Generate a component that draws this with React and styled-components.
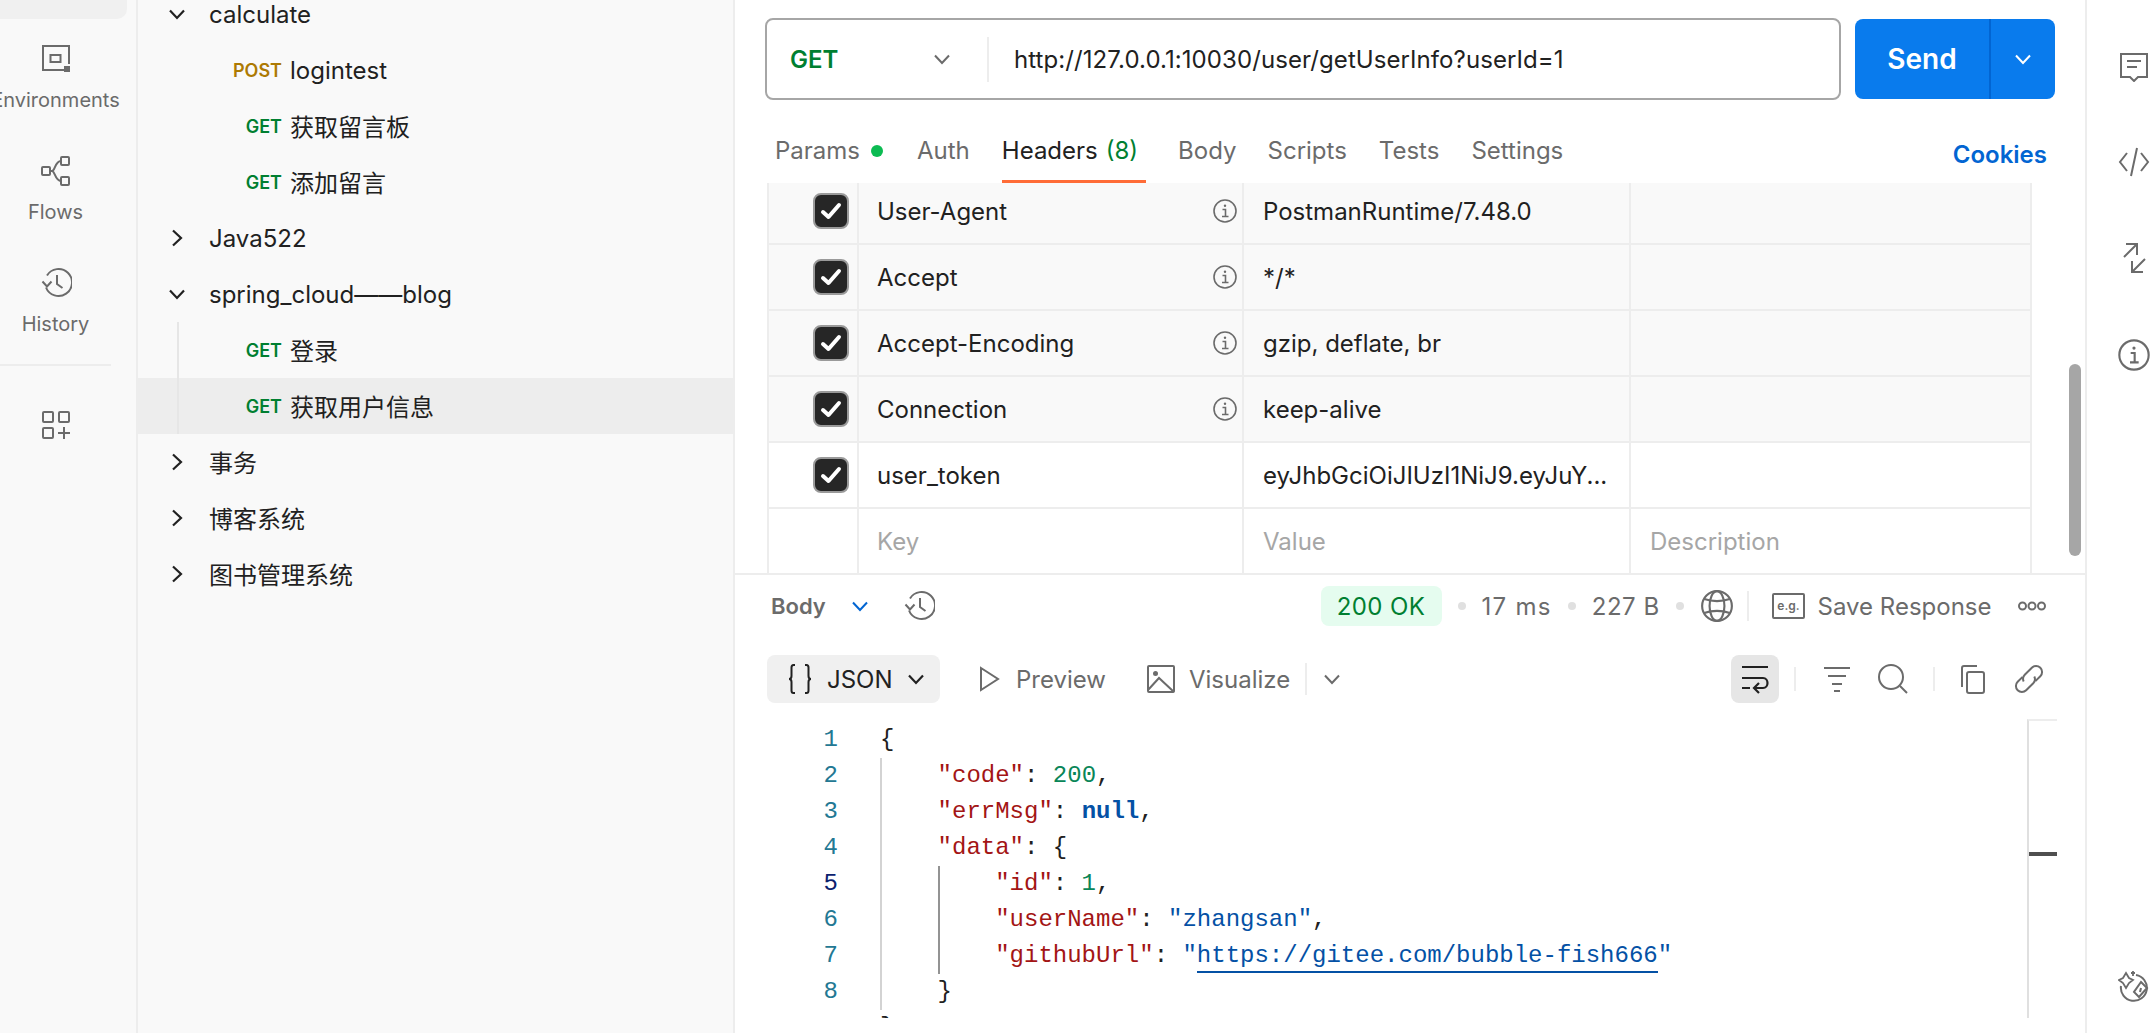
import React from "react";
import styled, { createGlobalStyle } from "styled-components";

const Global = createGlobalStyle`
  html, body { margin: 0; padding: 0; background: #fff; overflow: hidden; }
  * { box-sizing: border-box; }
  body { font-family: Inter, "Noto Sans CJK SC", sans-serif; color: #212121; }
`;

const Page = styled.div`
  display: grid;
  grid-template-columns: 138px 597px 1350px 69px;
  width: 2154px;
  height: 1033px;
  overflow: hidden;
`;

/* left rail */
const Rail = styled.nav`
  background: #f9f9f9;
  border-right: 2px solid #ededed;
  overflow: hidden;
  display: flex;
  flex-direction: column;
`;
const RailActive = styled.div`
  width: 127px;
  height: 19px;
  flex: none;
  background: #f0f0f0;
  border-radius: 0 0 10px 0;
  margin-bottom: 24px;
`;
const RailItem = styled.div`
  width: 111px;
  height: 80px;
  flex: none;
  margin-bottom: 32px;
  display: flex;
  flex-direction: column;
  align-items: center;
  gap: 12.5px;
  color: #6b6b6b;
  font-size: 20px;
  line-height: 24px;
  white-space: nowrap;
`;
const RailRule = styled.div`
  width: 111px;
  height: 2px;
  flex: none;
  margin-top: -15px;
  background: #ededed;
`;
const RailAdd = styled.div`
  width: 111px;
  margin-top: 43px;
  display: flex;
  justify-content: center;
`;

/* tree */
const Side = styled.aside`
  background: #f9f9f9;
  border-right: 2px solid #ededed;
  overflow: hidden;
`;
const Tree = styled.div`
  margin-top: -14px;
`;
const Row = styled.div`
  position: relative;
  height: 56px;
  display: flex;
  align-items: center;
  font-size: 24px;
  color: #212121;
  white-space: nowrap;
  background: ${(p) => (p.$selected ? "#ededed" : "transparent")};
  ${(p) =>
    p.$guide
      ? `&::before { content: ""; position: absolute; left: 39px; top: 0; bottom: 0; width: 2px; background: #e6e6e6; }`
      : ""}
`;
const RowLabel = styled.span`
  margin-top: ${(p) => (p.$cjk ? "-2px" : "0")};
`;
const Chevron = styled.span`
  width: 24px;
  margin-left: 27px;
  margin-right: 20px;
  display: flex;
  justify-content: center;
  color: #212121;
`;
const Method = styled.span`
  width: 144px;
  margin-right: 8px;
  text-align: right;
  font-size: 18px;
  font-weight: 600;
  color: ${(p) => (p.$post ? "#ad7a03" : "#007f31")};
`;

/* main */
const Main = styled.main`
  position: relative;
  display: flex;
  flex-direction: column;
  background: #fff;
  overflow: hidden;
`;
const UrlRow = styled.div`
  display: flex;
  align-items: center;
  gap: 14px;
  padding: 18px 30px 0;
`;
const UrlBox = styled.div`
  width: 1076px;
  height: 82px;
  border: 2px solid #a6a6a6;
  border-radius: 8px;
  display: flex;
  align-items: center;
  font-size: 24px;
`;
const MethodPick = styled.div`
  width: 222px;
  height: 45px;
  padding-left: 23px;
  padding-right: 33px;
  border-right: 2px solid #ededed;
  display: flex;
  align-items: center;
  justify-content: space-between;
  color: #007f31;
  font-weight: 600;
`;
const UrlText = styled.span`
  margin-left: 25px;
  letter-spacing: 0.08px;
`;
const SendBtn = styled.div`
  width: 200px;
  height: 80px;
  border-radius: 8px;
  background: #097bed;
  color: #fff;
  display: flex;
  align-items: center;
  font-size: 28px;
  font-weight: 600;
`;
const SendLabel = styled.span`
  width: 134px;
  text-align: center;
`;
const SendMore = styled.span`
  flex: 1;
  height: 100%;
  border-left: 2px solid #0265d2;
  display: flex;
  align-items: center;
  justify-content: center;
`;
const TabsRow = styled.div`
  display: flex;
  align-items: flex-start;
  gap: 32px;
  height: 83px;
  padding: 20px 38px 0 40px;
  font-size: 24px;
  color: #6b6b6b;
`;
const Tab = styled.div`
  height: 63px;
  line-height: 62px;
  white-space: nowrap;
  display: flex;
  align-items: flex-start;
  margin-right: ${(p) => p.$mr || 0}px;
  color: ${(p) => (p.$active ? "#212121" : "#6b6b6b")};
  ${(p) => (p.$active ? "border-bottom: 3px solid #ff6c37; padding-right: 8px;" : "")}
`;
const Count = styled.span`
  color: #007f31;
  margin-left: 8px;
`;
const GreenDot = styled.i`
  width: 12px;
  height: 12px;
  margin: 25px 0 0 11px;
  border-radius: 50%;
  background: #0cbb52;
`;
const Cookies = styled.div`
  margin-left: auto;
  margin-top: 4px;
  line-height: 62px;
  color: #0265d2;
  font-weight: 600;
`;
const TableClip = styled.div`
  height: 390px;
  overflow: hidden;
  margin-left: 32px;
  width: 1265px;
`;
const Table = styled.div`
  margin-top: -4px;
  font-size: 24px;
`;
const TRow = styled.div`
  display: grid;
  grid-template-columns: 90px 385px 387px 403px;
  height: 66px;
  border-bottom: 2px solid #ededed;
  background: ${(p) => (p.$muted ? "#f9f9f9" : "#fff")};
`;
const Cell = styled.div`
  border-left: 2px solid #ededed;
  ${(p) => (p.$last ? "border-right: 2px solid #ededed;" : "")}
  padding-left: ${(p) => p.$pl || 18}px;
  padding-right: 5px;
  display: flex;
  align-items: center;
  justify-content: space-between;
  white-space: nowrap;
  color: ${(p) => (p.$ph ? "#a6a6a6" : "#212121")};
`;
const CheckCell = styled(Cell)`
  padding: 0 8px 0 0;
  justify-content: flex-end;
`;
const Box = styled.span`
  width: 36px;
  height: 36px;
  border-radius: 8px;
  background: #262626;
  border: 2px solid #9a9a9a;
  display: flex;
  align-items: center;
  justify-content: center;
`;
const Scrollbar = styled.div`
  position: absolute;
  left: 1334px;
  top: 364px;
  width: 12px;
  height: 192px;
  border-radius: 6px;
  background: #a6a6a6;
`;
const RespHead = styled.div`
  height: 64px;
  border-top: 2px solid #ededed;
  display: flex;
  align-items: center;
  padding: 0 39px 0 36px;
  font-size: 24px;
  color: #6b6b6b;
  white-space: nowrap;
`;
const BodyLabel = styled.span`
  font-size: 22px;
  font-weight: 600;
  width: 77px;
`;
const Badge = styled.span`
  margin-left: auto;
  width: 121px;
  height: 40px;
  border-radius: 8px;
  background: #e5fcef;
  color: #007f31;
  letter-spacing: 0.4px;
  display: flex;
  align-items: center;
  justify-content: center;
`;
const Dot = styled.i`
  width: 8px;
  height: 8px;
  border-radius: 50%;
  background: #e0e0e0;
  margin: 0 16px;
`;
const Stat = styled.span`
  letter-spacing: ${(p) => p.$ls}px;
`;
const VRule = styled.i`
  width: 2px;
  height: ${(p) => p.$h || 30}px;
  background: #ededed;
  margin: 0 ${(p) => p.$r || 16}px 0 ${(p) => p.$l || 16}px;
`;
const More = styled.span`
  margin-left: 26.5px;
  display: flex;
`;
const Toolbar = styled.div`
  display: flex;
  align-items: center;
  height: 48px;
  margin-top: 18px;
  padding: 0 40px 0 32px;
  font-size: 24px;
  color: #6b6b6b;
  white-space: nowrap;
`;
const JsonBtn = styled.div`
  width: 173px;
  height: 48px;
  border-radius: 8px;
  background: #f0f0f0;
  color: #212121;
  display: flex;
  align-items: center;
  padding-left: 17px;
  gap: 11px;
  margin-right: 35px;
`;
const ToolItem = styled.div`
  display: flex;
  align-items: center;
  gap: 13px;
  margin-right: ${(p) => p.$mr || 0}px;
`;
const WrapBtn = styled.div`
  margin-left: auto;
  width: 48px;
  height: 48px;
  border-radius: 8px;
  background: #e6e6e6;
  display: flex;
  align-items: center;
  justify-content: center;
`;
const IconSlot = styled.span`
  display: flex;
  margin-right: ${(p) => p.$mr || 0}px;
`;
const CodeArea = styled.div`
  position: relative;
  height: 299px;
  margin-top: 16px;
  padding-top: 3px;
  overflow: hidden;
  font-family: "Liberation Mono", monospace;
  font-size: 24px;
`;
const Line = styled.div`
  display: flex;
  height: 36px;
  line-height: 36px;
  white-space: pre;
`;
const Num = styled.span`
  width: 145px;
  padding-right: 42px;
  text-align: right;
  color: ${(p) => (p.$on ? "#0b216f" : "#237893")};
`;
const Indent = styled.span`
  width: 57.6px;
  height: 36px;
  flex: none;
  border-left: 2px solid ${(p) => (p.$on ? "#939393" : "#d3d3d3")};
`;
const K = styled.span`color: #a31515;`;
const N = styled.span`color: #098658;`;
const S = styled.span`color: #0451a5;`;
const Nul = styled.span`color: #0451a5; font-weight: 700;`;
const Lnk = styled.span`
  color: #0451a5;
  border-bottom: 2px solid #0451a5;
  line-height: 30px;
  height: 32px;
  display: inline-block;
`;
const Minimap = styled.div`
  position: absolute;
  left: 1292px;
  top: 0;
  width: 30px;
  height: 100%;
  border-left: 2px solid #e0e0e0;
  border-top: 2px solid #ededed;
`;
const MiniMark = styled.div`
  margin-top: 131px;
  height: 4px;
  background: #4f4f4f;
`;

/* right rail */
const RightRail = styled.aside`
  border-left: 2px solid #ededed;
  background: #fff;
  display: flex;
  flex-direction: column;
  align-items: flex-end;
  padding: 50px 4px 0 0;
  color: #6b6b6b;
`;
const RightIcon = styled.span`
  display: flex;
  width: 32px;
  margin-bottom: ${(p) => p.$mb}px;
`;

/* icons */
const Svg = ({ s = 32, c = "#6b6b6b", w = 2, children, vb = 32 }) => (
  <svg width={s} height={s} viewBox={`0 0 ${vb} ${vb}`} fill="none" stroke={c} strokeWidth={w} style={{ display: "block", flex: "none" }}>
    {children}
  </svg>
);
const ChevDown = ({ s = 24, c = "#6b6b6b", w = 2 }) => (
  <Svg s={s} vb={24} c={c} w={w}><path d="M5 8.5l7 7.5 7-7.5" /></Svg>
);
const ChevRight = ({ c = "#212121" }) => (
  <Svg s={24} vb={24} c={c} w={2.2}><path d="M8 4.5l8 7.5-8 7.5" /></Svg>
);
const EnvIcon = () => (
  <Svg>
    <path d="M24 27H3V3h26v18" />
    <rect x="10.5" y="12" width="10" height="7" />
    <rect x="24" y="23" width="6" height="6" fill="#6b6b6b" stroke="none" />
  </Svg>
);
const FlowIcon = () => (
  <Svg>
    <rect x="2" y="12" width="8" height="8" rx="1" />
    <rect x="21" y="2" width="8" height="8" rx="1" />
    <rect x="21" y="22" width="8" height="8" rx="1" />
    <path d="M10 16h2c3 0 3-10 9-10M12 16c3 0 3 10 9 10" />
  </Svg>
);
const HistoryIcon = ({ s = 32 }) => (
  <Svg s={s}>
    <path d="M6 20.500A13.500 13.500 0 1 0 7 8.500" />
    <path d="M2.500 14.500l4.500 5 4.500-5" />
    <path d="M17 8v9l5.500 4" />
  </Svg>
);
const AddIcon = () => (
  <Svg>
    <rect x="3" y="3" width="10" height="10" rx="1" />
    <rect x="19" y="3" width="10" height="10" rx="1" />
    <rect x="3" y="19" width="10" height="10" rx="1" />
    <path d="M24 18v12M18 24h12" />
  </Svg>
);
const InfoIcon = ({ s = 24, w = 1.6 }) => (
  <Svg s={s} vb={24} w={w}>
    <circle cx="12" cy="12" r="11" />
    <path d="M9.500 10.500H12.500V17.500M9 17.500h6.500" />
    <circle cx="12" cy="6.800" r="1.200" fill="#6b6b6b" stroke="none" />
  </Svg>
);
const Check = () => (
  <svg width="24" height="24" viewBox="0 0 24 24" fill="none" stroke="#fff" strokeWidth="4" strokeLinecap="round" strokeLinejoin="round" style={{ display: "block" }}>
    <path d="M4 13l5.500 5L20 6" />
  </svg>
);
const Globe = () => (
  <Svg s={34}>
    <circle cx="16" cy="16" r="14" />
    <ellipse cx="16" cy="16" rx="7" ry="14" />
    <path d="M4 9.500c7 2.500 17 2.500 24 0M4 22.500c7-2.500 17-2.500 24 0" />
  </Svg>
);
const EgIcon = () => (
  <svg width="34" height="26" viewBox="0 0 34 26" fill="none" style={{ display: "block", flex: "none" }}>
    <rect x="1" y="1" width="31" height="24" rx="1" stroke="#6b6b6b" strokeWidth="2" />
    <text x="16.5" y="17" fontFamily="Inter, sans-serif" fontSize="12" fontWeight="600" fill="#6b6b6b" textAnchor="middle">e.g.</text>
  </svg>
);
const Ooo = () => (
  <svg width="28" height="12" viewBox="0 0 28 12" fill="none" stroke="#6b6b6b" strokeWidth="2" style={{ display: "block" }}>
    <circle cx="4.500" cy="6" r="3.500" /><circle cx="14" cy="6" r="3.500" /><circle cx="23.500" cy="6" r="3.500" />
  </svg>
);
const Braces = () => (
  <svg width="32" height="32" viewBox="0 0 32 32" fill="none" stroke="#212121" strokeWidth="2" style={{ display: "block", flex: "none" }}>
    <path d="M11 2H9.500C8 2 7.500 3 7.500 4.500V13c0 1.500-1 3-2.500 3 1.500 0 2.500 1.500 2.500 3v8.500C7.500 29 8 30 9.500 30H11" />
    <path d="M21 2h1.500C24 2 24.500 3 24.500 4.500V13c0 1.500 1 3 2.500 3-1.500 0-2.500 1.500-2.500 3v8.500c0 1.500-.5 2.500-2 2.500H21" />
  </svg>
);
const PlayIcon = () => (
  <Svg s={28} vb={28}><path d="M6 3l17 11-17 11z" /></Svg>
);
const ImageIcon = () => (
  <Svg s={30} vb={30}>
    <rect x="2" y="2" width="26" height="26" rx="1" />
    <circle cx="9.500" cy="9.500" r="2.500" fill="#6b6b6b" stroke="none" />
    <path d="M2 26l11-12 15 14" />
  </Svg>
);
const WrapIcon = () => (
  <Svg s={32} c="#212121" w={2.2}>
    <path d="M3 4h26M3 15h21c6 0 6 10 0 10h-8M3 25h8" />
    <path d="M20 20l-5 5 5 5" />
  </Svg>
);
const FilterIcon = () => (
  <Svg s={32}><path d="M3 5h26M7 13h18M11 21h10M13 28h6" /></Svg>
);
const SearchIcon = () => (
  <Svg s={32}><circle cx="14" cy="14" r="12" /><path d="M23 23l7 7" /></Svg>
);
const CopyIcon = () => (
  <Svg s={32}>
    <rect x="10" y="9" width="17" height="21" rx="2" />
    <path d="M5 24V5a2 2 0 0 1 2-2h13" />
  </Svg>
);
const LinkIcon = () => (
  <Svg s={32}>
    <g transform="rotate(-45 16 16)">
      <path d="M13 10H6a6 6 0 0 0 0 12h10a6 6 0 0 0 5.500-4" />
      <path d="M19 22h7a6 6 0 0 0 0-12H16a6 6 0 0 0-5.500 4" />
    </g>
  </Svg>
);
const CommentIcon = () => (
  <Svg>
    <path d="M3 4h26v23H20l-4 4-4-4H3z" />
    <path d="M9 11h14M9 17h10" />
  </Svg>
);
const CodeIcon = () => (
  <Svg><path d="M9 7l-7 9 7 9M23 7l7 9-7 9M19 2l-6 28" /></Svg>
);
const ResizeIcon = () => (
  <Svg>
    <path d="M6 15L19 2M8 2h11v11" />
    <path d="M27 17L14 30M25 30H14V19" />
  </Svg>
);
const SparkIcon = () => (
  <Svg>
    <path d="M18 5a13 13 0 1 1-15 11" />
    <path d="M23 12l6 6-8 9-5-5z" />
    <path d="M23 18l-1 4" />
    <path d="M8 3l3 5 4 2-4 3-3 5-3-5-4-3 4-2zM15 1v5M13 3h4" strokeWidth="1.800" />
  </Svg>
);

const tree = [
  { t: "calculate", open: true },
  { t: "logintest", m: "POST" },
  { t: "获取留言板", m: "GET", cjk: true },
  { t: "添加留言", m: "GET", cjk: true },
  { t: "Java522" },
  { t: "spring_cloud——blog", open: true },
  { t: "登录", m: "GET", guide: true, cjk: true },
  { t: "获取用户信息", m: "GET", guide: true, selected: true, cjk: true },
  { t: "事务", cjk: true },
  { t: "博客系统", cjk: true },
  { t: "图书管理系统", cjk: true },
];

const headers = [
  ["User-Agent", "PostmanRuntime/7.48.0"],
  ["Accept", "*/*"],
  ["Accept-Encoding", "gzip, deflate, br"],
  ["Connection", "keep-alive"],
];

const code = [
  { i: 0, c: <span>{"{"}</span> },
  { i: 1, c: <><K>"code"</K>: <N>200</N>,</> },
  { i: 1, c: <><K>"errMsg"</K>: <Nul>null</Nul>,</> },
  { i: 1, c: <><K>"data"</K>: {"{"}</> },
  { i: 2, on: true, c: <><K>"id"</K>: <N>1</N>,</> },
  { i: 2, c: <><K>"userName"</K>: <S>"zhangsan"</S>,</> },
  { i: 2, c: <><K>"githubUrl"</K>: <S>"</S><Lnk>https://gitee.com/bubble-fish666</Lnk><S>"</S></> },
  { i: 1, c: <>{"}"}</> },
  { i: 0, c: <>{"}"}</> },
];

export default function App() {
  return (
    <Page>
      <Global />
      <Rail>
        <RailActive />
        <RailItem><EnvIcon />Environments</RailItem>
        <RailItem><FlowIcon />Flows</RailItem>
        <RailItem><HistoryIcon />History</RailItem>
        <RailRule />
        <RailAdd><AddIcon /></RailAdd>
      </Rail>

      <Side>
        <Tree>
          {tree.map((r) => (
            <Row key={r.t} $selected={r.selected} $guide={r.guide}>
              {r.m ? (
                <Method $post={r.m === "POST"}>{r.m}</Method>
              ) : (
                <Chevron>{r.open ? <ChevDown c="#212121" w={2.2} /> : <ChevRight />}</Chevron>
              )}
              <RowLabel $cjk={r.cjk}>{r.t}</RowLabel>
            </Row>
          ))}
        </Tree>
      </Side>

      <Main>
        <UrlRow>
          <UrlBox>
            <MethodPick>GET<ChevDown /></MethodPick>
            <UrlText>http://127.0.0.1:10030/user/getUserInfo?userId=1</UrlText>
          </UrlBox>
          <SendBtn>
            <SendLabel>Send</SendLabel>
            <SendMore><ChevDown c="#fff" /></SendMore>
          </SendBtn>
        </UrlRow>
        <TabsRow>
          <Tab $mr={2}>Params<GreenDot /></Tab>
          <Tab>Auth</Tab>
          <Tab $active>Headers<Count>(8)</Count></Tab>
          <Tab $mr={-1}>Body</Tab>
          <Tab>Scripts</Tab>
          <Tab>Tests</Tab>
          <Tab>Settings</Tab>
          <Cookies>Cookies</Cookies>
        </TabsRow>
        <TableClip>
          <Table>
            {headers.map(([k, v]) => (
              <TRow key={k} $muted>
                <CheckCell><Box><Check /></Box></CheckCell>
                <Cell>{k}<InfoIcon /></Cell>
                <Cell $pl={19}>{v}</Cell>
                <Cell $last />
              </TRow>
            ))}
            <TRow>
              <CheckCell><Box><Check /></Box></CheckCell>
              <Cell>user_token</Cell>
              <Cell $pl={19}>eyJhbGciOiJIUzI1NiJ9.eyJuY...</Cell>
              <Cell $last />
            </TRow>
            <TRow>
              <CheckCell />
              <Cell $ph>Key</Cell>
              <Cell $ph $pl={19}>Value</Cell>
              <Cell $ph $pl={19} $last>Description</Cell>
            </TRow>
          </Table>
        </TableClip>
        <Scrollbar />

        <RespHead>
          <BodyLabel>Body</BodyLabel>
          <IconSlot $mr={31}><ChevDown c="#0265d2" /></IconSlot>
          <HistoryIcon />
          <Badge>200 OK</Badge>
          <Dot /><Stat $ls={1.3}>17 ms</Stat><Dot /><Stat $ls={0.5}>227 B</Stat><Dot />
          <Globe />
          <VRule $h={30} $l={13.3} $r={23.4} />
          <IconSlot $mr={11.2}><EgIcon /></IconSlot>
          Save Response
          <More><Ooo /></More>
        </RespHead>
        <Toolbar>
          <JsonBtn><Braces />JSON<ChevDown c="#212121" w={2.2} /></JsonBtn>
          <ToolItem $mr={40}><PlayIcon />Preview</ToolItem>
          <ToolItem><ImageIcon />Visualize</ToolItem>
          <VRule $h={32} $l={15} $r={13} />
          <ChevDown />
          <WrapBtn><WrapIcon /></WrapBtn>
          <VRule $h={24} $l={15} $r={25} />
          <IconSlot $mr={24}><FilterIcon /></IconSlot>
          <SearchIcon />
          <VRule $h={24} $l={24} $r={22} />
          <IconSlot $mr={24}><CopyIcon /></IconSlot>
          <LinkIcon />
        </Toolbar>
        <CodeArea>
          {code.map((l, idx) => (
            <Line key={idx}>
              <Num $on={l.on}>{idx + 1}</Num>
              {l.i >= 1 && <Indent />}
              {l.i >= 2 && <Indent $on />}
              <span>{l.c}</span>
            </Line>
          ))}
          <Minimap><MiniMark /></Minimap>
        </CodeArea>
      </Main>

      <RightRail>
        <RightIcon $mb={64}><CommentIcon /></RightIcon>
        <RightIcon $mb={64}><CodeIcon /></RightIcon>
        <RightIcon $mb={65}><ResizeIcon /></RightIcon>
        <RightIcon $mb={599}><InfoIcon s={32} w={1.6} /></RightIcon>
        <RightIcon $mb={0}><SparkIcon /></RightIcon>
      </RightRail>
    </Page>
  );
}
